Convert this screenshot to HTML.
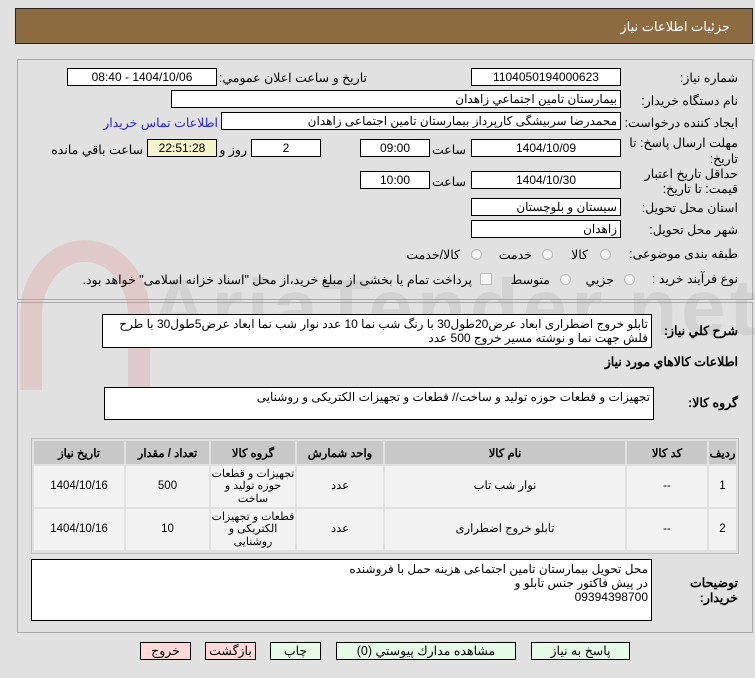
<!DOCTYPE html>
<html><head><meta charset="utf-8"><style>
body{margin:0;width:755px;height:678px;background:#e1e1e1;font-family:Tahoma,"Liberation Sans","Noto Sans CJK SC",sans-serif;font-size:12px;color:#000;position:relative;overflow:hidden}
.a{position:absolute}
.hdr{left:15px;top:8px;width:736px;height:34px;background:#8c6b40;border:1px solid #222}
.hdr span{position:absolute;right:22px;top:10px;color:#fff;font-size:13px}
.panel{border:1px solid #aaa}
.in{position:absolute;background:#fff;border:1px solid #000;height:18px;line-height:16px;direction:rtl;padding:0 3px;box-sizing:border-box;font-size:12px;white-space:nowrap;overflow:hidden}
.c{text-align:center}
.lb{position:absolute;direction:rtl;white-space:nowrap;font-size:12.5px;line-height:15px}
.ta{position:absolute;background:#fff;border:1px solid #000;direction:rtl;padding:2px 3px;box-sizing:border-box;font-size:12px;line-height:14px}
table{border-collapse:separate;border-spacing:2px;font-size:12px}
th{background:#c8c8c8;height:23px;font-weight:bold;font-size:11.5px;padding:0}
td{background:#f2f2f2;text-align:center;line-height:13px;padding:0;font-size:11.5px}
.rad{position:absolute;width:11px;height:11px;border:1px solid #bbb;border-radius:50%;background:#f4f4f4;box-sizing:border-box}
.btn{position:absolute;top:642px;height:18px;border:1px solid #000;box-sizing:border-box;text-align:center;line-height:16px;font-size:12.5px;background:#e6fbe6}
.pk{background:#ffd8d8}
</style></head><body>
<div class="a hdr"><span>جزئيات اطلاعات نياز</span></div>
<div class="a panel" style="left:17px;top:59px;width:734px;height:239px"></div>
<div class="a panel" style="left:17px;top:302px;width:734px;height:329px"></div>
<div class="a" style="left:20px;top:240px;width:130px;height:150px;border:22px solid rgba(220,120,120,.22);border-radius:50% 50% 0 0;border-bottom:none;box-sizing:border-box"></div>
<div class="a" style="left:150px;top:262px;font:bold 80px 'Liberation Sans',sans-serif;color:rgba(150,150,150,.2);letter-spacing:4px">AriaTender.net</div>

<div class="lb" style="right:17px;top:71px">شماره نياز:</div>
<div class="in c" style="left:471px;top:68px;width:150px">1104050194000623</div>
<div class="lb" style="right:388px;top:71px">تاريخ و ساعت اعلان عمومي:</div>
<div class="in c" style="left:67px;top:68px;width:150px">1404/10/06 - 08:40</div>

<div class="lb" style="right:17px;top:94px">نام دستگاه خريدار:</div>
<div class="in" style="left:171px;top:90px;width:450px">بيمارستان تامين اجتماعي زاهدان</div>
<div class="lb" style="right:17px;top:116px">ايجاد كننده درخواست:</div>
<div class="in" style="left:221px;top:112px;width:400px">محمدرضا سربیشگی کارپرداز بیمارستان تامین اجتماعی زاهدان</div>
<div class="lb" style="right:537px;top:116px;color:#2626d9">اطلاعات تماس خريدار</div>

<div class="lb" style="right:17px;top:135px;line-height:16px;text-align:right">مهلت ارسال پاسخ: تا<br>تاريخ:</div>
<div class="in c" style="left:471px;top:139px;width:150px">1404/10/09</div>
<div class="lb" style="right:289px;top:143px">ساعت</div>
<div class="in c" style="left:360px;top:139px;width:70px">09:00</div>
<div class="in c" style="left:251px;top:139px;width:70px">2</div>
<div class="lb" style="right:508px;top:143px">روز و</div>
<div class="in c" style="left:147px;top:139px;width:70px;background:#f5f2cc">22:51:28</div>
<div class="lb" style="right:612px;top:143px">ساعت باقي مانده</div>

<div class="lb" style="right:17px;top:167px;line-height:15px;text-align:right">حداقل تاريخ اعتبار<br>قيمت: تا تاريخ:</div>
<div class="in c" style="left:471px;top:171px;width:150px">1404/10/30</div>
<div class="lb" style="right:289px;top:175px">ساعت</div>
<div class="in c" style="left:360px;top:171px;width:70px">10:00</div>

<div class="lb" style="right:17px;top:201px">استان محل تحويل:</div>
<div class="in" style="left:471px;top:198px;width:150px">سيستان و بلوچستان</div>
<div class="lb" style="right:17px;top:223px">شهر محل تحويل:</div>
<div class="in" style="left:471px;top:220px;width:150px">زاهدان</div>

<div class="lb" style="right:17px;top:247px">طبقه بندی موضوعی:</div>
<div class="rad" style="left:600px;top:249px"></div><div class="lb" style="right:167px;top:248px">كالا</div>
<div class="rad" style="left:542px;top:249px"></div><div class="lb" style="right:223px;top:248px">خدمت</div>
<div class="rad" style="left:471px;top:249px"></div><div class="lb" style="right:295px;top:248px">كالا/خدمت</div>

<div class="lb" style="right:17px;top:272px">نوع فرآيند خريد :</div>
<div class="rad" style="left:624px;top:274px"></div><div class="lb" style="right:141px;top:273px">جزيي</div>
<div class="rad" style="left:560px;top:274px"></div><div class="lb" style="right:205px;top:273px">متوسط</div>
<div class="a" style="left:480px;top:273px;width:12px;height:12px;border:1px solid #bbb;background:#f4f4f4;box-sizing:border-box"></div>
<div class="lb" style="right:283px;top:273px">پرداخت تمام يا بخشی از مبلغ خريد،از محل "اسناد خزانه اسلامی" خواهد بود.</div>

<div class="lb" style="right:17px;top:324px;font-weight:bold">شرح كلي نياز:</div>
<div class="ta" style="left:102px;top:314px;width:550px;height:34px;line-height:14px">تابلو خروج اضطراری ابعاد عرض20طول30 با رنگ شب نما 10 عدد  نوار شب نما ابعاد عرض5طول30 با طرح فلش جهت نما و نوشته مسير خروج 500 عدد</div>
<div class="lb" style="right:17px;top:355px;font-weight:bold">اطلاعات كالاهاي مورد نياز</div>
<div class="lb" style="right:17px;top:396px;font-weight:bold">گروه كالا:</div>
<div class="ta" style="left:104px;top:387px;width:550px;height:33px">تجهیزات و قطعات حوزه تولید و ساخت// قطعات و تجهیزات الکتریکی و روشنایی</div>

<div class="a" style="left:31px;top:438px;width:706px;height:114px;border:1px solid #bbb">
<table dir="rtl" style="width:100%">
<tr><th style="width:27px">رديف</th><th style="width:80px">كد كالا</th><th>نام كالا</th><th style="width:86px">واحد شمارش</th><th style="width:84px">گروه كالا</th><th style="width:83px">تعداد / مقدار</th><th style="width:90px">تاريخ نياز</th></tr>
<tr style="height:41px"><td>1</td><td>--</td><td>نوار شب تاب</td><td>عدد</td><td style="font-size:11px;line-height:12.5px">تجهيزات و قطعات حوزه توليد و ساخت</td><td>500</td><td>1404/10/16</td></tr>
<tr style="height:41px"><td>2</td><td>--</td><td>تابلو خروج اضطراری</td><td>عدد</td><td style="font-size:11px;line-height:12.5px">قطعات و تجهيزات الكتريكی و روشنايی</td><td>10</td><td>1404/10/16</td></tr>
</table></div>

<div class="lb" style="right:17px;top:576px;font-weight:bold;line-height:15px;text-align:right">توضيحات<br>خريدار:</div>
<div class="ta" style="left:31px;top:559px;width:621px;height:62px;line-height:14px">محل تحویل بیمارستان تامین اجتماعی هزینه حمل با فروشنده<br>در پیش فاکتور جنس تابلو و<br>09394398700&nbsp;&nbsp;</div>

<div class="btn" style="left:531px;width:99px">پاسخ به نياز</div>
<div class="btn" style="left:336px;width:180px">مشاهده مدارك پيوستي (0)</div>
<div class="btn" style="left:270px;width:51px">چاپ</div>
<div class="btn pk" style="left:205px;width:51px">بازگشت</div>
<div class="btn pk" style="left:140px;width:51px">خروج</div>
</body></html>
